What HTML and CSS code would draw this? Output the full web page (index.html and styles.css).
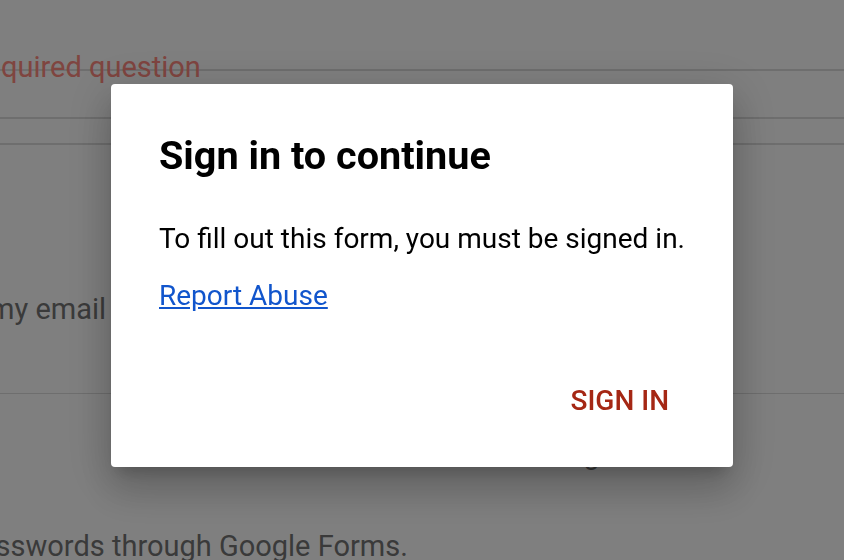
FILE: index.html
```
<!DOCTYPE html>
<html lang="en">
<head>
    <meta charset="UTF-8">
    <meta name="viewport" content="width=device-width, initial-scale=1.0">
    <title>Sign in to continue</title>
    <link rel="stylesheet" href="styles.css">
</head>
<body>
    <div class="sheet">
        <div class="row row-head">
            <p class="required">* Required question</p>
        </div>
        <div class="row row-gap"></div>
        <div class="row row-thin"></div>
        <div class="row row-email">
            <p class="line email">Send to my email</p>
        </div>
        <div class="row-foot">
            <p class="line pager">Page 1 of 1</p>
            <p class="line warning">Never submit passwords through Google Forms.</p>
        </div>
    </div>

    <div class="overlay">
        <div class="dialog">
            <h2 class="dialog-title">Sign in to continue</h2>
            <p class="dialog-text">To fill out this form, you must be signed in.</p>
            <a class="dialog-link" href="#">Report Abuse</a>
            <div class="dialog-actions">
                <button class="btn-signin">SIGN IN</button>
            </div>
        </div>
    </div>
</body>
</html>
```

FILE: styles.css
```
body {
    margin: 0;
    font-family: Roboto, "Liberation Sans", Arial, sans-serif;
    background: #fff;
    overflow: hidden;
}
p {
    margin: 0;
}

/* page behind the dialog */
.sheet {
    width: 844px;
    height: 560px;
    overflow: hidden;
    font-size: 29px;
    line-height: 34px;
}
.row {
    box-sizing: border-box;
    border-bottom: 2px solid #dcdcdc;
}
.row-head {
    height: 71px;
    padding-top: 50px;
}
.required {
    color: #ff8a80;
    text-indent: -52px;
    white-space: nowrap;
}
.row-gap {
    height: 48px;
}
.row-thin {
    height: 26px;
}
.row-email {
    height: 249px;
    padding-top: 147px;
    border-bottom-width: 1px;
}
.line {
    color: #757575;
    white-space: nowrap;
}
.email {
    text-indent: -116px;
}
.row-foot {
    padding-top: 44px;
}
.pager {
    padding-left: 551px;
    font-size: 28px;
}
.warning {
    margin-top: 57px;
    text-indent: -215px;
}

/* modal */
.overlay {
    position: fixed;
    inset: 0;
    background: rgba(0, 0, 0, 0.5);
    display: flex;
    align-items: center;
    justify-content: center;
    padding-bottom: 9px;
}
.dialog {
    box-sizing: border-box;
    width: 622px;
    height: 383px;
    padding: 48px 48px 40px 48px;
    background: #fff;
    border-radius: 4px;
    box-shadow: 0 24px 38px 3px rgba(0, 0, 0, 0.14),
                0 9px 46px 8px rgba(0, 0, 0, 0.12),
                0 11px 15px -7px rgba(0, 0, 0, 0.2);
}
.dialog-title {
    margin: 0;
    font-size: 39.6px;
    line-height: 48px;
    font-weight: 700;
    color: #000;
}
.dialog-text {
    margin-top: 41px;
    font-size: 28px;
    line-height: 36px;
    color: #000;
}
.dialog-link {
    display: block;
    margin-top: 21px;
    font-size: 28px;
    line-height: 36px;
    color: #1155cc;
}
.dialog-actions {
    display: flex;
    justify-content: flex-end;
    margin-top: 61px;
}
.btn-signin {
    padding: 8px 16px;
    border: none;
    background: none;
    font-family: inherit;
    font-size: 28px;
    line-height: 36px;
    font-weight: 500;
    color: #a52714;
    cursor: pointer;
}
```
